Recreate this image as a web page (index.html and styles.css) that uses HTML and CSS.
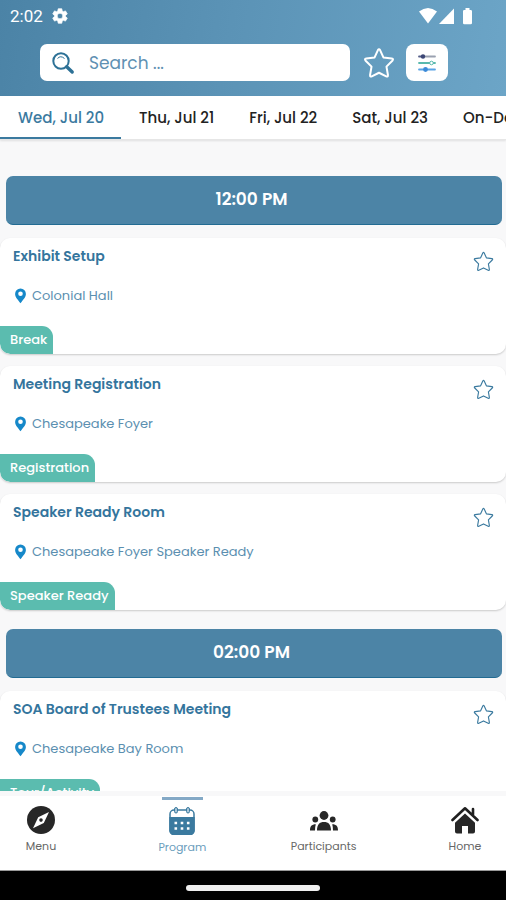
FILE: index.html
```html
<!DOCTYPE html>
<html lang="en">
<head>
<meta charset="utf-8">
<meta name="viewport" content="width=device-width, initial-scale=1">
<title>Program</title>
<link rel="stylesheet" href="styles.css">
</head>
<body>
<svg class="sprite" aria-hidden="true">
  <symbol id="star" viewBox="0 0 24 24"><path d="M11.200 2.300Q12 .900 12.800 2.300L15.300 7.800 21.600 8.700Q23.200 9 22 10.300L17.600 14.700 18.700 21Q18.800 22.700 17.400 22L12 19.300 6.600 22Q5.200 22.700 5.300 21L6.400 14.700 2 10.300Q.800 9 2.400 8.700L8.700 7.800Z" fill="none" stroke="currentColor" stroke-linejoin="round"/></symbol>
  <symbol id="pin" viewBox="0 0 12 16"><path fill-rule="evenodd" d="M6 .5A5.400 5.400 0 0 0 .6 5.900C.6 9.500 3.800 11.800 6 15.300 8.200 11.800 11.400 9.500 11.400 5.900A5.400 5.400 0 0 0 6 .5ZM6 3.500A2.300 2.300 0 1 1 6 8.100 2.300 2.300 0 0 1 6 3.500Z" fill="currentColor"/></symbol>
</svg>

<header class="top">
  <div class="status">
    <span class="clock">2:02</span>
    <svg class="gear" viewBox="0 0 24 24" aria-hidden="true"><path fill="currentColor" stroke="currentColor" stroke-linejoin="round" d="M19.400 13a7.500 7.500 0 0 0 0-2l2.300-1.700-2.400-4.100-2.700 1.100a7.500 7.500 0 0 0-1.800-1L14.400 2.400H9.600l-.4 2.900a7.500 7.500 0 0 0-1.800 1L4.700 5.200 2.300 9.300 4.600 11a7.500 7.500 0 0 0 0 2l-2.300 1.700 2.400 4.100 2.700-1.100a7.500 7.500 0 0 0 1.800 1l.4 2.900h4.800l.4-2.900a7.500 7.500 0 0 0 1.800-1l2.700 1.100 2.400-4.100ZM12 15.800a3.800 3.800 0 1 1 0-7.600 3.800 3.800 0 0 1 0 7.600Z"/></svg>
    <svg class="signals" viewBox="0 0 56 18" aria-hidden="true"><g fill="currentColor"><path d="M1 4.500Q10-2.500 19 4.500L10 16.500Z"/><path d="M21 17H36V1.500Z"/><path d="M47.500 1h4v2h1.200q1.300 0 1.300 1.300V16q0 1.300-1.300 1.300h-6.400q-1.300 0-1.300-1.300V4.300Q45 3 46.300 3H47.500Z"/></g></svg>
  </div>
  <form class="tools" role="search">
    <label class="search">
      <svg class="lens" viewBox="0 0 24 24" aria-label="Search"><circle cx="10" cy="10" r="7.700" fill="none" stroke="currentColor" stroke-width="2"/><path d="M6.500 7.500q3-3.500 7 0" fill="none" stroke="currentColor"/><path d="m15.700 15.700 5.500 5.300" stroke="currentColor" stroke-width="3.400" stroke-linecap="round"/></svg>
      <input type="text" placeholder="Search ...">
    </label>
    <button type="button" class="fav" aria-label="Favorites"><svg viewBox="0 0 24 24"><use href="#star"/></svg></button>
    <button type="button" class="filter" aria-label="Filters">
      <svg viewBox="0 0 18 18"><g fill="none" stroke-width="1.800" stroke-linecap="round"><path d="M6 2.500h11" stroke="#9aa1b0"/><path d="M1 2.500h4" stroke="#56608a"/><path d="M1 9h16" stroke="#59b9ae"/><path d="M1 15.500h16" stroke="#5aa4e6"/></g><circle cx="5" cy="2.500" r="2.200" fill="#3c4775"/><circle cx="13.500" cy="9" r="1.800" fill="#fff" stroke="#59b9ae"/><circle cx="7.500" cy="15.500" r="2.400" fill="#3b8ad8"/></svg>
    </button>
  </form>
</header>

<nav class="days" aria-label="Days">
  <a href="#wed" class="day current" aria-current="page">Wed, Jul 20</a>
  <a href="#thu" class="day">Thu, Jul 21</a>
  <a href="#fri" class="day">Fri, Jul 22</a>
  <a href="#sat" class="day">Sat, Jul 23</a>
  <a href="#demand" class="day">On-Demand</a>
</nav>

<main class="program">
  <section class="slot">
    <h2 class="time">12:00 PM</h2>
    <article class="card">
      <div class="head"><h3>Exhibit Setup</h3><button type="button" class="mark" aria-label="Add Exhibit Setup to favorites"><svg viewBox="0 0 24 24"><use href="#star"/></svg></button></div>
      <p class="place"><svg viewBox="0 0 12 16" aria-hidden="true"><use href="#pin"/></svg>Colonial Hall</p>
      <span class="tag">Break</span>
    </article>
    <article class="card">
      <div class="head"><h3>Meeting Registration</h3><button type="button" class="mark" aria-label="Add Meeting Registration to favorites"><svg viewBox="0 0 24 24"><use href="#star"/></svg></button></div>
      <p class="place"><svg viewBox="0 0 12 16" aria-hidden="true"><use href="#pin"/></svg>Chesapeake Foyer</p>
      <span class="tag">Registration</span>
    </article>
    <article class="card">
      <div class="head"><h3>Speaker Ready Room</h3><button type="button" class="mark" aria-label="Add Speaker Ready Room to favorites"><svg viewBox="0 0 24 24"><use href="#star"/></svg></button></div>
      <p class="place"><svg viewBox="0 0 12 16" aria-hidden="true"><use href="#pin"/></svg>Chesapeake Foyer Speaker Ready</p>
      <span class="tag">Speaker Ready</span>
    </article>
  </section>
  <section class="slot">
    <h2 class="time">02:00 PM</h2>
    <article class="card">
      <div class="head"><h3>SOA Board of Trustees Meeting</h3><button type="button" class="mark" aria-label="Add SOA Board of Trustees Meeting to favorites"><svg viewBox="0 0 24 24"><use href="#star"/></svg></button></div>
      <p class="place"><svg viewBox="0 0 12 16" aria-hidden="true"><use href="#pin"/></svg>Chesapeake Bay Room</p>
      <span class="tag">Tour/Activity</span>
    </article>
  </section>
</main>

<nav class="bottom" aria-label="Main">
  <a href="#menu" class="item">
    <svg viewBox="0 0 28 28" aria-hidden="true"><circle cx="14" cy="14" r="14" fill="#272727"/><path fill="#fff" fill-rule="evenodd" d="M22 6 16.800 17 6 22.200 11.200 11.200ZM14 12.300a1.800 1.800 0 1 0 0 3.600 1.800 1.800 0 0 0 0-3.600Z"/></svg>
    <span>Menu</span>
  </a>
  <a href="#program" class="item active" aria-current="page">
    <svg viewBox="0 0 28 28" aria-hidden="true"><rect x="2" y="3" width="24" height="24.500" rx="4" fill="#fff" stroke="#3b7a9f" stroke-width="1.500"/><path d="M1.300 10h25.400v13.500a4.500 4.500 0 0 1-4.500 4.500H5.800a4.500 4.500 0 0 1-4.500-4.500Z" fill="#3b7a9f"/><g fill="#a9c6d8" stroke="#3b7a9f"><rect x="6.500" y=".5" width="3" height="5.500" rx="1.500"/><rect x="18.500" y=".5" width="3" height="5.500" rx="1.500"/></g><path d="M6.500 16h2.600M12.700 16h2.600M18.900 16h2.600M6.500 21.500h2.600M12.700 21.500h2.600M18.900 21.500h2.600" stroke="#fff" stroke-width="2.600"/></svg>
    <span>Program</span>
  </a>
  <a href="#participants" class="item">
    <svg viewBox="0 0 28 28" aria-hidden="true"><g fill="#272727"><circle cx="14" cy="9.500" r="4.400"/><circle cx="5.300" cy="13.500" r="2.900"/><circle cx="22.700" cy="13.500" r="2.900"/><path d="M7 24.500C7 18.500 9.500 16 14 16s7 2.500 7 8.500ZM0 24.500c0-4 1.500-6.200 5.800-6.200Q5 21 5 24.500ZM28 24.500c0-4-1.500-6.200-5.800-6.200Q23 21 23 24.500Z"/></g></svg>
    <span>Participants</span>
  </a>
  <a href="#home" class="item">
    <svg viewBox="0 0 28 28" aria-hidden="true"><path d="M1.500 14 14 2.300 26.500 14M22 8.500V3" fill="none" stroke="#202020" stroke-width="2.600" stroke-linecap="round" stroke-linejoin="round"/><path d="M4 16.800 14 7.500 24 16.800V25.500q0 2-2 2h-5V20h-6v7.500H6q-2 0-2-2Z" fill="#272727"/></svg>
    <span>Home</span>
  </a>
</nav>
<footer class="gesture"><div class="pill"></div></footer>
</body>
</html>
```
FILE: styles.css
```css
* { box-sizing: border-box; }

body {
  margin: 0;
  height: 100vh;
  display: flex;
  flex-direction: column;
  overflow: hidden;
  background: #f8f8f9;
  color: #222;
  font-family: Poppins, Inter, "Open Sans", sans-serif;
}

h2, h3, p { margin: 0; }
a { color: inherit; text-decoration: none; }
button { border: 0; padding: 0; background: none; }
svg { display: block; flex: none; }
.sprite { position: absolute; width: 0; height: 0; }

.top {
  flex: none;
  padding-bottom: 15px;
  color: #fff;
  background: linear-gradient(100deg, #4b83a6 0%, #5b93b6 45%, #6ca5c7 100%);
}

.status {
  display: flex;
  align-items: center;
  height: 32px;
  padding: 0 32px 0 10px;
  gap: 8px;
}
.clock { font-family: Roboto, sans-serif; font-size: 17px; line-height: 20px; }
.gear { width: 18px; height: 18px; }
.signals { width: 56px; height: 18px; margin-left: auto; }

.tools {
  display: flex;
  align-items: center;
  margin-top: 12px;
  padding: 0 58px 0 40px;
}
.search {
  flex: 1;
  min-width: 0;
  display: flex;
  align-items: center;
  gap: 14px;
  height: 37px;
  padding: 0 12px 0 11px;
  border-radius: 7px;
  background: #fff;
  color: #2d7196;
}
.lens { width: 24px; height: 24px; }
.search input {
  flex: 1;
  min-width: 0;
  border: 0;
  padding: 0;
  outline: 0;
  background: none;
  font: 400 17px/24px Poppins, Inter, sans-serif;
  color: #4b83a6;
}
.search input::placeholder { color: #5f91b3; opacity: 1; }
.fav { margin: 0 11px 0 13px; color: #fff; }
.fav svg { width: 32px; height: 32px; stroke-width: 1.5px; }
.filter {
  display: grid;
  place-items: center;
  width: 42px;
  height: 37px;
  border-radius: 8px;
  background: #fff;
}
.filter svg { width: 18px; height: 18px; }

.days {
  flex: none;
  display: flex;
  height: 44px;
  overflow: hidden;
  background: #fff;
  border-bottom: 1px solid #e6e6e6;
  box-shadow: 0 1px 2px #0000001a;
  font-size: 15px;
  font-weight: 500;
  line-height: 20px;
}
.day { flex: none; padding: 12px 17px 0 18px; white-space: nowrap; }
.current { color: #3b7a9f; border-bottom: 2px solid #3b7a9f; }

.program {
  flex: 1;
  min-height: 0;
  overflow: hidden;
  padding-top: 36px;
}
.slot { display: grid; gap: 12px; }
.slot + .slot { margin-top: 19px; }
.time {
  margin: 0 4px 1px 6px;
  padding: 12px 5px 13px 0;
  border-radius: 7px;
  border-bottom: 1px solid #226b92;
  background: #4c84a6;
  color: #fff;
  text-align: center;
  font-size: 17px;
  font-weight: 600;
  line-height: 23px;
}
.card {
  display: flex;
  flex-direction: column;
  align-items: flex-start;
  overflow: hidden;
  border-radius: 10px;
  background: #fff;
  box-shadow: 0 1px 2px #00000030;
}
.head {
  align-self: stretch;
  display: flex;
  justify-content: space-between;
  padding: 8px 12px 0 13px;
}
.head h3 { color: #34759d; font-size: 14px; font-weight: 600; line-height: 20px; }
.mark { margin-top: 5px; color: #3b7a9f; }
.mark svg { width: 21px; height: 21px; stroke-width: 1.3px; }
.place {
  display: flex;
  align-items: center;
  gap: 5px;
  margin: 14px 14px 20px;
  color: #5b8fb0;
  font-size: 13px;
  line-height: 20px;
}
.place svg { width: 13px; height: 16px; color: #1688c9; }
.tag {
  padding: 4px 6px 5px 10px;
  border-radius: 0 11px 0 10px;
  background: #5bbcaf;
  color: #fff;
  font-size: 13px;
  font-weight: 500;
  line-height: 19px;
}

.bottom {
  flex: none;
  display: flex;
  justify-content: space-between;
  border-top: 5px solid #f8f8f9;
  border-bottom: 1px solid #999;
  background: #fff;
}
.item {
  display: flex;
  flex-direction: column;
  align-items: center;
  width: 82px;
  height: 74px;
  padding-top: 10px;
  gap: 4px;
  color: #666;
  font-size: 11px;
  line-height: 16px;
}
.item svg { width: 28px; height: 28px; }
.active { padding-top: 1px; color: #6b9dbc; }
.active::before {
  content: "";
  width: 41px;
  height: 3px;
  margin-bottom: 3px;
  background: #84a9c6;
}
.gesture {
  flex: none;
  display: grid;
  place-items: center;
  height: 29px;
  padding-top: 5px;
  background: #000;
}
.pill { width: 134px; height: 6px; border-radius: 3px; background: #efefef; }
```
